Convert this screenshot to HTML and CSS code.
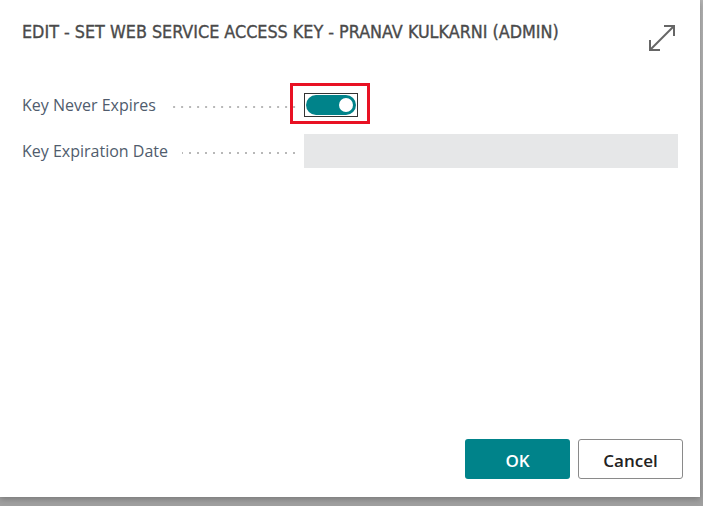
FILE: index.html
```html
<!DOCTYPE html>
<html lang="en">
<head>
<meta charset="utf-8">
<title>Set Web Service Access Key</title>
<link rel="stylesheet" href="styles.css">
</head>
<body>
<div class="dialog">
  <div class="header">
    <h1 class="title">EDIT - SET WEB SERVICE ACCESS KEY - PRANAV KULKARNI (ADMIN)</h1>
    <button class="expand" aria-label="Expand">
      <svg width="28" height="28" viewBox="0 0 28 28" fill="none" stroke="#666" stroke-width="2">
        <path d="M2 26 L26 2"/>
        <path d="M16 2 H26 V12"/>
        <path d="M2 16 V26 H12"/>
      </svg>
    </button>
  </div>
  <div class="form">
    <div class="row">
      <div class="label"><span>Key Never Expires</span><span class="leader"></span></div>
      <div class="value">
        <div class="toggle-wrap">
          <div class="toggle"><span class="knob"></span></div>
          <span class="highlight"></span>
        </div>
      </div>
    </div>
    <div class="row">
      <div class="label"><span>Key Expiration Date</span><span class="leader"></span></div>
      <div class="value"><div class="field"></div></div>
    </div>
  </div>
  <div class="footer">
    <button class="btn btn-ok">OK</button>
    <button class="btn btn-cancel">Cancel</button>
  </div>
</div>
</body>
</html>
```
FILE: styles.css
```css
html, body {
  margin: 0;
  padding: 0;
}
body {
  width: 703px;
  height: 506px;
  background: linear-gradient(#b4b4b4, #a0a0a0);
  overflow: hidden;
}
.dialog {
  width: 700px;
  height: 497px;
  background: #fff;
  display: flex;
  flex-direction: column;
  box-sizing: border-box;
  padding: 0 20px 0 22px;
  box-shadow: 0 2px 6px rgba(0,0,0,0.25);
}
.header {
  display: flex;
  align-items: center;
  justify-content: space-between;
  height: 64px;
}
.title {
  margin: 0;
  font-family: "Liberation Sans Narrow", "DejaVu Sans Condensed", sans-serif;
  font-stretch: condensed;
  font-size: 17.8px;
  font-weight: 400;
  color: #4a4a4a;
  -webkit-text-stroke: 0.35px #4a4a4a;
  white-space: nowrap;
  padding-bottom: 1px;
}
.expand {
  border: 0;
  background: none;
  padding: 0;
  width: 28px;
  height: 28px;
  margin-right: 4px;
  margin-top: 11px;
}
.expand svg { display: block; }
.form {
  display: flex;
  flex-direction: column;
  gap: 12px;
  margin-top: 24px;
}
.row {
  display: flex;
  align-items: center;
  height: 34px;
}
.label {
  width: 282px;
  display: flex;
  align-items: center;
  font-family: "Open Sans", sans-serif;
  font-size: 16px;
  color: #505c6d;
}
.leader {
  flex: 1;
  height: 2px;
  margin: 3px 6px 0 14px;
  background-image: radial-gradient(circle, #b8b8b8 0.8px, transparent 1.1px);
  background-size: 8px 2px;
  background-position: right center;
}
.value {
  flex: 1;
  display: flex;
  align-items: center;
}
.toggle-wrap {
  position: relative;
  width: 54px;
  height: 24px;
  border: 1px solid #333;
  box-sizing: border-box;
  display: flex;
  align-items: center;
  justify-content: center;
}
.toggle {
  width: 50px;
  height: 20px;
  background: #00838a;
  border-radius: 10px;
  display: flex;
  align-items: center;
  justify-content: flex-end;
  padding-right: 3px;
  box-sizing: border-box;
}
.knob {
  width: 14px;
  height: 14px;
  border-radius: 50%;
  background: #fff;
}
.highlight {
  position: absolute;
  left: -15px;
  top: -11px;
  width: 80px;
  height: 41px;
  border: 3px solid #e81123;
  box-sizing: border-box;
}
.field {
  width: 374px;
  height: 34px;
  background: #e6e7e8;
}
.footer {
  margin-top: auto;
  display: flex;
  justify-content: flex-end;
  gap: 8px;
  padding-bottom: 18px;
  margin-right: -3px;
}
.btn {
  width: 105px;
  height: 40px;
  border-radius: 3px;
  font-family: "Open Sans", sans-serif;
  font-size: 17px;
  font-weight: 600;
  box-sizing: border-box;
  padding: 2px 0 0;
}
.btn-ok {
  background: #00838a;
  color: #fff;
  border: 0;
}
.btn-cancel {
  background: #fff;
  color: #222;
  border: 1px solid #8a8a8a;
}
```
